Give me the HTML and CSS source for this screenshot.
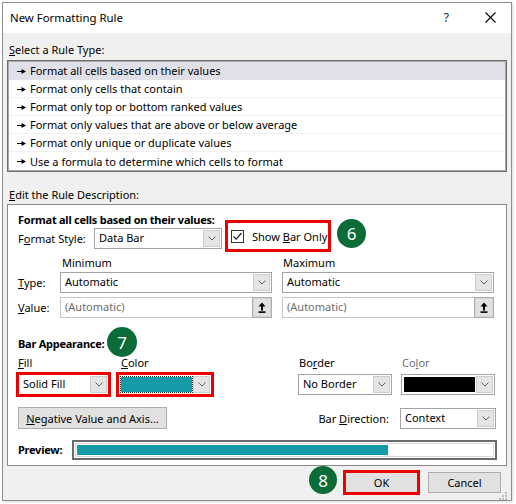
FILE: index.html
```html
<!DOCTYPE html>
<html>
<head>
<meta charset="utf-8">
<title>New Formatting Rule</title>
<link rel="stylesheet" href="styles.css">
</head>
<body>
<div class="dialog">
  <div class="titlebar">
    <span class="title">New Formatting Rule</span>
    <span class="help">?</span>
    <svg class="close" width="11" height="11" viewBox="0 0 11 11"><path d="M0.5 0.5L10.5 10.5M10.5 0.5L0.5 10.5" stroke="#000" stroke-width="1.1" fill="none"/></svg>
  </div>
  <div class="body">
    <div class="caption"><u>S</u>elect a Rule Type:</div>
    <div class="list">
      <div class="item sel"><svg class="arr" width="10" height="7" viewBox="0 0 10 7"><path d="M0 3H4.5V1L9 3.5 4.5 6V4H0Z" fill="#000"/></svg>Format all cells based on their values</div>
      <div class="item"><svg class="arr" width="10" height="7" viewBox="0 0 10 7"><path d="M0 3H4.5V1L9 3.5 4.5 6V4H0Z" fill="#000"/></svg>Format only cells that contain</div>
      <div class="item"><svg class="arr" width="10" height="7" viewBox="0 0 10 7"><path d="M0 3H4.5V1L9 3.5 4.5 6V4H0Z" fill="#000"/></svg>Format only top or bottom ranked values</div>
      <div class="item"><svg class="arr" width="10" height="7" viewBox="0 0 10 7"><path d="M0 3H4.5V1L9 3.5 4.5 6V4H0Z" fill="#000"/></svg>Format only values that are above or below average</div>
      <div class="item"><svg class="arr" width="10" height="7" viewBox="0 0 10 7"><path d="M0 3H4.5V1L9 3.5 4.5 6V4H0Z" fill="#000"/></svg>Format only unique or duplicate values</div>
      <div class="item last"><svg class="arr" width="10" height="7" viewBox="0 0 10 7"><path d="M0 3H4.5V1L9 3.5 4.5 6V4H0Z" fill="#000"/></svg>Use a formula to determine which cells to format</div>
    </div>
    <div class="caption cap2"><u>E</u>dit the Rule Description:</div>
    <div class="group">
      <div class="bold">Format all cells based on their values:</div>
      <div class="row style-row">
        <span class="lbl style-lbl">F<u>o</u>rmat Style:</span>
        <div class="combo w128"><span class="val">Data Bar</span><span class="dd"><svg width="8" height="5" viewBox="0 0 8 5"><path d="M0.5 0.5L4 4L7.5 0.5" stroke="#606060" fill="none"/></svg></span></div>
        <div class="check hl">
          <span class="box"><svg width="11" height="11" viewBox="0 0 11 11"><path d="M1.5 5.5L4.2 8.2L9.5 2" stroke="#222" stroke-width="1.2" fill="none"/></svg></span>
          <span>Show <u>B</u>ar Only</span>
        </div>
      </div>
      <div class="grid3 mm-row">
        <span></span>
        <span class="mmlbl min">Minimum</span>
        <span class="mmlbl max">Maximum</span>
      </div>
      <div class="grid3 type-row">
        <span class="lbl"><u>T</u>ype:</span>
        <div class="combo w212"><span class="val">Automatic</span><span class="dd"><svg width="8" height="5" viewBox="0 0 8 5"><path d="M0.5 0.5L4 4L7.5 0.5" stroke="#606060" fill="none"/></svg></span></div>
        <div class="combo w212"><span class="val">Automatic</span><span class="dd"><svg width="8" height="5" viewBox="0 0 8 5"><path d="M0.5 0.5L4 4L7.5 0.5" stroke="#606060" fill="none"/></svg></span></div>
      </div>
      <div class="grid3 value-row">
        <span class="lbl"><u>V</u>alue:</span>
        <div class="inputgrp w212"><span class="input">(Automatic)</span><span class="up"><svg width="8" height="11" viewBox="0 0 8 11"><path d="M4 0.5L7.5 4.5H5V8.5H3V4.5H0.5Z" fill="#000"/><rect x="0.5" y="9.3" width="7" height="1.6" fill="#000"/></svg></span></div>
        <div class="inputgrp w212"><span class="input">(Automatic)</span><span class="up"><svg width="8" height="11" viewBox="0 0 8 11"><path d="M4 0.5L7.5 4.5H5V8.5H3V4.5H0.5Z" fill="#000"/><rect x="0.5" y="9.3" width="7" height="1.6" fill="#000"/></svg></span></div>
      </div>
      <div class="bold bar-app">Bar Appearance:</div>
      <div class="grid4 ba-lbls">
        <span class="l-fill"><u>F</u>ill</span>
        <span class="l-color"><u>C</u>olor</span>
        <span class="l-border">Bo<u>r</u>der</span>
        <span class="l-color2 disabled">Co<u>l</u>or</span>
      </div>
      <div class="grid4 ba-row">
        <div class="combo w91 red"><span class="val">Solid Fill</span><span class="dd"><svg width="8" height="5" viewBox="0 0 8 5"><path d="M0.5 0.5L4 4L7.5 0.5" stroke="#606060" fill="none"/></svg></span></div>
        <div class="combo w94 red"><span class="swatch teal focus"></span><span class="dd"><svg width="8" height="5" viewBox="0 0 8 5"><path d="M0.5 0.5L4 4L7.5 0.5" stroke="#606060" fill="none"/></svg></span></div>
        <div class="combo w94"><span class="val">No Border</span><span class="dd"><svg width="8" height="5" viewBox="0 0 8 5"><path d="M0.5 0.5L4 4L7.5 0.5" stroke="#606060" fill="none"/></svg></span></div>
        <div class="combo w94"><span class="swatch black"></span><span class="dd"><svg width="8" height="5" viewBox="0 0 8 5"><path d="M0.5 0.5L4 4L7.5 0.5" stroke="#606060" fill="none"/></svg></span></div>
      </div>
      <div class="row neg-row">
        <span class="btn neg"><u>N</u>egative Value and Axis...</span>
        <span class="spacer"></span>
        <span class="lbl dir-lbl">Bar <u>D</u>irection:</span>
        <div class="combo w96"><span class="val">Context</span><span class="dd"><svg width="8" height="5" viewBox="0 0 8 5"><path d="M0.5 0.5L4 4L7.5 0.5" stroke="#606060" fill="none"/></svg></span></div>
      </div>
      <div class="row preview-row">
        <span class="bold prev-lbl">Preview:</span>
        <div class="preview"><div class="pv-inner"><div class="pv-bar"></div></div></div>
      </div>
      <span class="badge b6">6</span>
      <span class="badge b7">7</span>
    </div>
    <div class="footer">
      <span class="btn ok red">OK</span>
      <span class="btn cancel">Cancel</span>
      <span class="badge b8">8</span>
      <svg class="grip" width="8" height="8" viewBox="0 0 8 8"><g fill="#bdbdbd"><rect x="6" y="0" width="2" height="2"/><rect x="3" y="3" width="2" height="2"/><rect x="6" y="3" width="2" height="2"/><rect x="0" y="6" width="2" height="2"/><rect x="3" y="6" width="2" height="2"/><rect x="6" y="6" width="2" height="2"/></g></svg>
    </div>
  </div>
</div>
</body>
</html>
```

FILE: styles.css
```css
* { box-sizing: border-box; }
html, body { margin: 0; padding: 0; }
body {
  background: #ffffff;
  font-family: "Noto Sans", "DejaVu Sans", sans-serif;
  font-size: 11px;
  color: #000;
  width: 516px;
  height: 504px;
  overflow: hidden;
}
u { text-decoration: underline; text-underline-offset: 1px; }

.dialog {
  position: relative;
  margin: 2px 0 0 2px;
  width: 510px;
  height: 499px;
  border: 1px solid #8e8e8e;
  background: #f0f0f0;
  display: flex;
  flex-direction: column;
  box-shadow: 1px 1px 2px rgba(0,0,0,0.15);
}

.titlebar {
  height: 30px;
  background: #fff;
  display: flex;
  align-items: center;
  padding: 0 15px 0 7px;
  flex: none;
}
.title { flex: 1; font-size: 11.4px; padding-bottom: 1px; }
.help { font-size: 12px; margin-right: 36px; padding-bottom: 2px; color: #222; }
.close { display: block; margin-top: -1px; }

.body {
  position: relative;
  flex: 1;
  padding: 0 4px 0 4px;
  display: flex;
  flex-direction: column;
}
.caption { line-height: 16px; height: 16px; margin-top: 9px; padding-left: 2px; }
.cap2 { margin-top: 15px; }

.list {
  margin-top: 2px;
  height: 112px;
  border: 1px solid #6e6e6e;
  box-shadow: inset 0 0 0 1px #a9a9a9;
  background: #fff;
  padding: 1px;
  overflow: hidden;
}
.item {
  height: 18px;
  line-height: 17px;
  padding-left: 8px;
  border-bottom: 1px solid #f0f0f0;
  display: flex;
  align-items: center;
  white-space: nowrap;
}
.item.sel { background: #e0e0e8; border-bottom-color: #e0e0e8; }
.item.last { border-bottom: none; }
.arr { flex: none; margin-right: 3px; margin-top: 1px; }

.group {
  position: relative;
  margin-top: 1px;
  border: 1px solid #8a8a8a;
  background: #fff;
  padding: 7px 10px 5px 10px;
  display: flex;
  flex-direction: column;
}
.bold { font-weight: bold; line-height: 16px; height: 16px; letter-spacing: -0.25px; }
.row { display: flex; align-items: center; }
.lbl { white-space: nowrap; }

.combo {
  display: flex;
  height: 21px;
  border: 1px solid #a3a3a3;
  background: #fff;
}
.combo .val { flex: 1; padding-left: 4px; line-height: 18px; white-space: nowrap; overflow: hidden; }
.combo .dd {
  flex: none;
  width: 17px;
  margin: 1px;
  background: #e5e5e5;
  border: 1px solid #cdcdcd;
  display: flex;
  align-items: center;
  justify-content: center;
}
.w128 { width: 128px; }
.w91 { width: 91px; }
.w94 { width: 94px; }
.w96 { width: 96px; }
.w212 { width: 212px; }
.red { outline: 3px solid #ee0000; outline-offset: -1px; }

.style-row { height: 21px; }
.style-lbl { width: 76px; }
.check {
  position: relative;
  display: flex;
  align-items: center;
  margin-left: 9px;
  margin-top: -5px;
}
.check .box {
  width: 13px; height: 13px;
  border: 1px solid #333;
  background: #fff;
  display: flex; align-items: center; justify-content: center;
  margin-right: 8px;
}
.check.hl::after {
  content: "";
  position: absolute;
  left: -6px; right: -4px; top: -9px; bottom: -8px;
  border: 3px solid #ee0000;
}

.grid3 {
  display: grid;
  grid-template-columns: 42px 222px 212px;
  align-items: center;
}
.mm-row { margin-top: 6px; line-height: 16px; height: 16px; }
.min { padding-left: 2px; }
.max { padding-left: 1px; }
.type-row { margin-top: 1px; }
.value-row { margin-top: 4px; }
.inputgrp { display: flex; height: 21px; }
.inputgrp .input {
  flex: 1;
  border: 1px solid #c6c6c6;
  border-right: none;
  color: #6d6d6d;
  padding-left: 4px;
  line-height: 18px;
}
.inputgrp .up {
  width: 20px;
  background: #e1e1e1;
  border: 1px solid #adadad;
  box-shadow: inset 0 0 0 1px #d4d4d4;
  display: flex; align-items: center; justify-content: center;
}

.bar-app { margin-top: 18px; }
.grid4 {
  display: grid;
  grid-template-columns: 100px 180px 103px 94px;
  align-items: center;
}
.ba-lbls { margin-top: 3px; line-height: 16px; height: 16px; }
.l-color { padding-left: 3px; }
.l-border { padding-left: 1px; }
.l-color2 { padding-left: 1px; }
.disabled { color: #707070; }
.ba-row { margin-top: 3px; }
.swatch { flex: 1; margin: 2px 0 2px 2px; }
.swatch.teal { background: #139ca8; }
.swatch.focus { outline: 1px dotted #222; outline-offset: 0; }
.swatch.black { background: #000; }

.btn {
  display: flex;
  align-items: center;
  justify-content: center;
  background: #e1e1e1;
  border: 1px solid #adadad;
  white-space: nowrap;
}
.neg-row { margin-top: 12px; height: 22px; }
.neg { width: 149px; height: 22px; }
.spacer { flex: 1; }
.dir-lbl { margin-right: 11px; }

.preview-row { margin-top: 11px; height: 20px; }
.prev-lbl { width: 54px; }
.preview {
  flex: 1;
  margin-right: -1px;
  height: 20px;
  border: 2px solid #6a6a6a;
  background: #fff;
  padding: 1px;
}
.pv-inner {
  height: 100%;
  border: 1px solid #d9d9d9;
  padding: 1px;
}
.pv-bar { width: 311px; height: 100%; background: #139ca8; }

.footer {
  position: relative;
  flex: 1;
  display: flex;
  justify-content: flex-end;
  align-items: flex-start;
  padding: 6px 6px 0 0;
}
.footer .btn { width: 73px; height: 21px; }
.ok { margin-right: 10px; }
.grip { position: absolute; right: 0; bottom: 0; }

.badge {
  position: absolute;
  border-radius: 50%;
  background: #0b6c37;
  color: #fff;
  font-size: 17px;
  display: flex;
  align-items: center;
  justify-content: center;
  line-height: 1;
}
.b6 { left: 329px; top: 14px; width: 29px; height: 29px; }
.b7 { left: 99px; top: 122px; width: 30px; height: 30px; }
.b8 { left: 302px; top: 0; width: 28px; height: 28px; }
```
